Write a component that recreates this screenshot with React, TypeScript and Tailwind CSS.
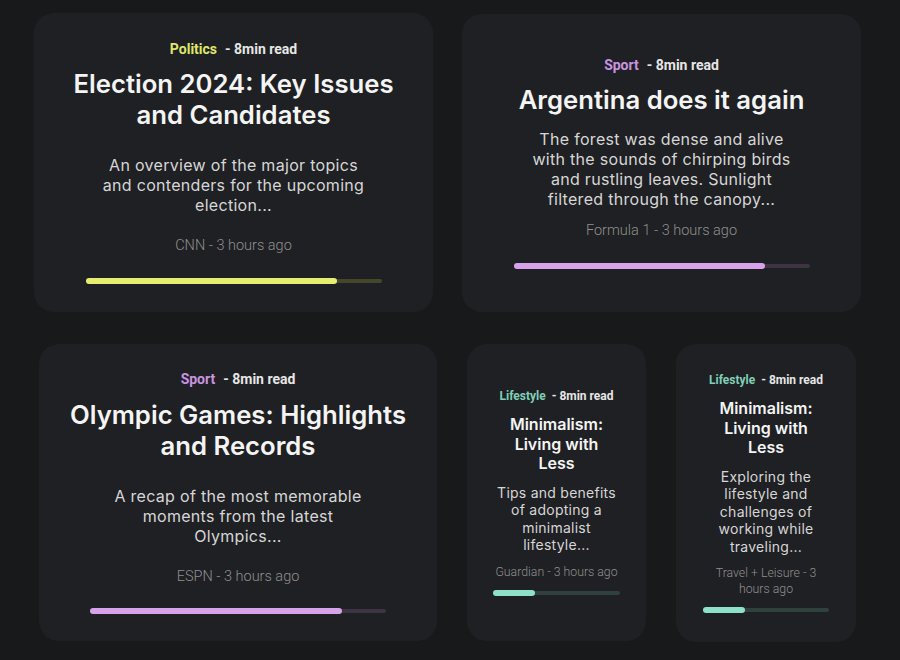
import React from "react";

type CardProps = {
  cardCls: string;
  category: string;
  catCls: string;
  metaCls: string;
  title: string;
  titleCls: string;
  body: string;
  bodyCls: string;
  source: string;
  sourceCls: string;
  barWrapCls: string;
  trackCls: string;
  fillCls: string;
  small?: boolean;
};

function Card(p: CardProps) {
  return (
    <div
      className={`flex flex-col items-center justify-center rounded-[20px] bg-[#1f2023] text-center ${p.cardCls}`}
    >
      <div className={`flex items-center font-bold leading-tight ${p.metaCls}`} style={{ fontFamily: "Roboto, sans-serif" }}>
        <span className={p.catCls}>{p.category}</span>
        <span className={`text-[#e6e6e6] ${p.small ? "ml-[6px]" : "ml-2"}`}>- 8min read</span>
      </div>
      <h2 className={`font-semibold text-[#f4f4f4] ${p.titleCls}`} style={{ fontFamily: "Inter, sans-serif" }}>
        {p.title}
      </h2>
      <p className={`leading-tight text-[#d6d6d6] ${p.bodyCls}`} style={{ fontFamily: "Inter, sans-serif" }}>
        {p.body}
      </p>
      <div className={`font-light leading-tight text-[#8f8f8f] ${p.sourceCls}`} style={{ fontFamily: "Roboto, sans-serif" }}>
        {p.source}
      </div>
      <div className={`flex h-[6px] items-center ${p.barWrapCls}`}>
        <div className={`relative h-1 w-full rounded-full ${p.trackCls}`}>
          <div className={`absolute left-0 top-1/2 h-[6px] -translate-y-1/2 rounded-full ${p.fillCls}`} />
        </div>
      </div>
    </div>
  );
}

export default function App() {
  return (
    <div className="h-[660px] w-[900px] overflow-hidden bg-[#18191b]">
      <div className="flex items-start pl-[34px] pt-[13px]">
        <Card
          cardCls="w-[399px] h-[299px]"
          category="Politics"
          catCls="text-[#dfe66b]"
          metaCls="text-[14px]"
          title="Election 2024: Key Issues and Candidates"
          titleCls="mt-[10px] w-[355px] text-[25.7px] leading-[31px]"
          body="An overview of the major topics and contenders for the upcoming election..."
          bodyCls="mt-[25px] w-[272px] text-base tracking-[0.3px]"
          source="CNN - 3 hours ago"
          sourceCls="mt-[22px] text-[14.5px]"
          barWrapCls="mt-[23px] w-[296px]"
          trackCls="bg-[#45472a]"
          fillCls="w-[85%] bg-[#e6ee72]"
        />
        <Card
          cardCls="ml-[29px] mt-px w-[399px] h-[298px]"
          category="Sport"
          catCls="text-[#c994e0]"
          metaCls="text-[14px]"
          title="Argentina does it again"
          titleCls="mt-[10px] w-[355px] text-[25.7px] leading-[31px]"
          body="The forest was dense and alive with the sounds of chirping birds and rustling leaves. Sunlight filtered through the canopy..."
          bodyCls="mt-[14px] w-[272px] text-base tracking-[0.3px]"
          source="Formula 1 - 3 hours ago"
          sourceCls="mt-[13px] text-[14.5px]"
          barWrapCls="mt-[23px] w-[296px]"
          trackCls="bg-[#3e3342]"
          fillCls="w-[85%] bg-[#d8a2ea]"
        />
      </div>
      <div className="mt-[32px] flex items-start pl-[39px]">
        <Card
          cardCls="w-[398px] h-[297px]"
          category="Sport"
          catCls="text-[#c994e0]"
          metaCls="text-[14px]"
          title="Olympic Games: Highlights and Records"
          titleCls="mt-[10px] w-[355px] text-[25.7px] leading-[31px]"
          body="A recap of the most memorable moments from the latest Olympics..."
          bodyCls="mt-[25px] w-[272px] text-base tracking-[0.3px]"
          source="ESPN - 3 hours ago"
          sourceCls="mt-[22px] text-[14.5px]"
          barWrapCls="mt-[22px] w-[296px]"
          trackCls="bg-[#3e3342]"
          fillCls="w-[85%] bg-[#d8a2ea]"
        />
        <Card
          small
          cardCls="ml-[30px] w-[179px] h-[297px]"
          category="Lifestyle"
          catCls="text-[#7fcfb6]"
          metaCls="text-[12px]"
          title="Minimalism: Living with Less"
          titleCls="mt-[11px] w-[114px] text-base leading-[19.5px]"
          body="Tips and benefits of adopting a minimalist lifestyle..."
          bodyCls="mt-[10px] w-[128px] text-sm tracking-[0.25px]"
          source="Guardian - 3 hours ago"
          sourceCls="mt-[11px] w-[134px] text-[12.3px]"
          barWrapCls="mt-[10px] w-[127px]"
          trackCls="bg-[#2f413c]"
          fillCls="w-[33%] bg-[#8fe0c8]"
        />
        <Card
          small
          cardCls="ml-[30px] w-[180px] h-[298px]"
          category="Lifestyle"
          catCls="text-[#7fcfb6]"
          metaCls="text-[12px]"
          title="Minimalism: Living with Less"
          titleCls="mt-[11px] w-[114px] text-base leading-[19.5px]"
          body="Exploring the lifestyle and challenges of working while traveling..."
          bodyCls="mt-[10px] w-[128px] text-sm tracking-[0.25px]"
          source="Travel + Leisure - 3 hours ago"
          sourceCls="mt-[11px] w-[118px] text-[12.3px]"
          barWrapCls="mt-[10px] w-[126px]"
          trackCls="bg-[#2f413c]"
          fillCls="w-[33%] bg-[#8fe0c8]"
        />
      </div>
    </div>
  );
}
